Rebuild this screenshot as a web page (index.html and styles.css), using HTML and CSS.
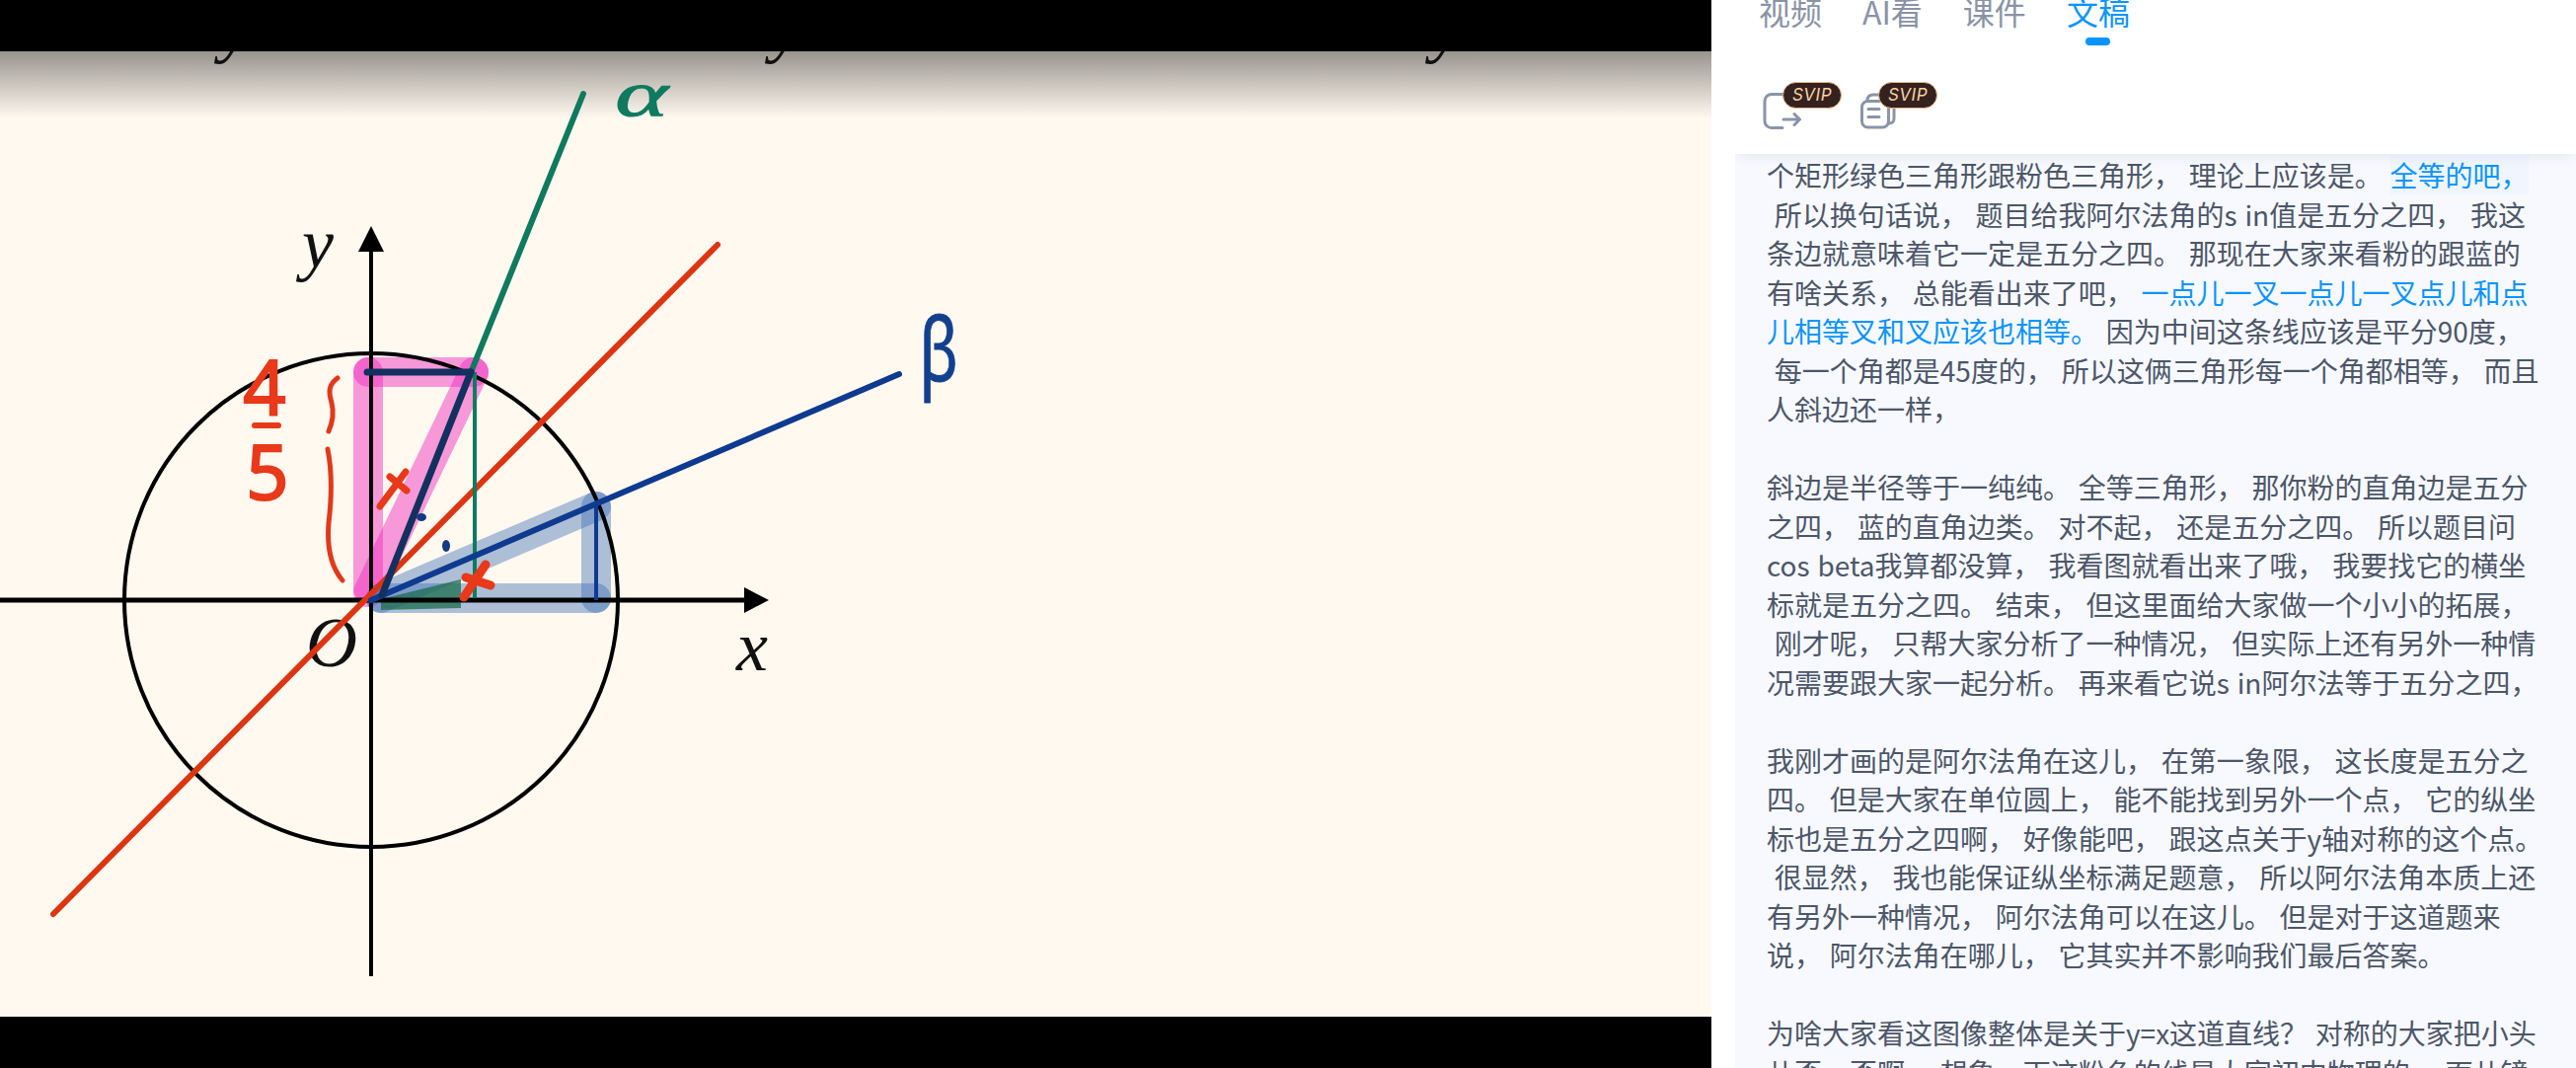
FILE: index.html
```html
<!DOCTYPE html>
<html lang="zh-CN">
<head>
    <meta charset="UTF-8">
    <title>文稿</title>
    <link rel="stylesheet" href="styles.css">
</head>
<body>

    <div class="video">
        <div class="video-bar"></div>
        <svg class="stage" viewBox="0 52 1734 978">
            <!-- previous slide, only the tails are left -->
            <text class="math" x="223" y="50">y</text>
            <text class="math" x="781" y="50">y</text>
            <text class="math" x="1450" y="50">y</text>

            <!-- pink triangle -->
            <g class="band band-pink">
                <line x1="373" y1="377" x2="480" y2="377"/>
                <line x1="373" y1="377" x2="373" y2="596"/>
                <line x1="480" y1="377" x2="373" y2="600"/>
            </g>

            <!-- blue triangle -->
            <g class="band band-blue">
                <line x1="386" y1="606" x2="604" y2="606"/>
                <line x1="604" y1="606" x2="604" y2="513"/>
                <line x1="604" y1="513" x2="386" y2="606"/>
            </g>
            <polygon class="tri-green" points="386,607 467,587 467,616 386,618"/>

            <circle class="unit" cx="376" cy="608" r="250"/>

            <line class="axis" x1="376" y1="250" x2="376" y2="989"/>
            <polygon points="376,229 363,255 389,255"/>
            <line class="axis axis-x" x1="0" y1="608" x2="758" y2="608"/>
            <polygon points="779,608 754,595 754,621"/>

            <text class="math" x="306" y="271">y</text>
            <text class="math" x="310" y="675">O</text>
            <text class="math" x="746" y="679">x</text>

            <line class="ln ln-red" x1="54" y1="926" x2="727" y2="248"/>
            <line class="ln ln-green" x1="591" y1="95" x2="478" y2="375"/>
            <line class="ln ln-green thin" x1="481" y1="377" x2="481" y2="606"/>
            <line class="ln ln-blue" x1="911" y1="379" x2="376" y2="608"/>
            <line class="ln ln-blue thin" x1="604" y1="513" x2="604" y2="608"/>
            <line class="ln ln-navy" x1="372" y1="377" x2="477" y2="377"/>
            <line class="ln ln-navy" x1="477" y1="377" x2="387" y2="603"/>

            <ellipse class="dot" cx="427" cy="524" rx="5" ry="4"/>
            <ellipse class="dot" cx="452" cy="553" rx="4" ry="6"/>

            <!-- red marks -->
            <path class="mark" d="M385 513L411 478M395 483L412 497"/>
            <path class="mark fat" d="M470 605L492 572M472 585L497 593"/>
            <path class="brace" d="M342 383C334 389 332 395 336 408C339 420 336 430 333 437"/>
            <path class="brace" d="M332 455C337 480 336 505 333 530C331 555 336 575 347 588"/>

            <text class="hand hand-red" x="268" y="420">4</text>
            <line class="ln-frac" x1="258" y1="431" x2="282" y2="431"/>
            <text class="hand hand-red" x="271" y="506">5</text>
            <text class="hand hand-green" transform="translate(650 117) scale(1.55 1)" x="0" y="0">α</text>
            <text class="hand hand-blue" transform="translate(951 386) scale(.72 1)" x="0" y="0">β</text>
        </svg>
        <div class="video-bar"></div>
    </div>

    <div class="panel">
        <div class="tabs">
            <div class="tab">视频</div>
            <div class="tab">AI看</div>
            <div class="tab">课件</div>
            <div class="tab active">文稿<span class="tab-line"></span></div>
        </div>

        <div class="doc">
            <div class="toolbar">
                <div class="tool">
                    <svg class="tool-icon" viewBox="0 0 40 40">
                        <path d="M23 3.5H10a7 7 0 0 0-7 7v20a7 7 0 0 0 7 7h11"/>
                        <path d="M22 29h16M33 23.5l5.5 5.5-5.5 5.5"/>
                    </svg>
                    <span class="svip">SVIP</span>
                </div>
                <div class="tool">
                    <svg class="tool-icon" viewBox="0 0 40 40">
                        <rect x="3.5" y="10.5" width="27" height="26.5" rx="6"/>
                        <path d="M9 10c0-4 2-6 6-6h15c4 0 6 2 6 6v18c0 3-2 5-5 5"/>
                        <path d="M10 18.5h11M10 26.5h11"/>
                    </svg>
                    <span class="svip svip-2">SVIP</span>
                </div>
            </div>

            <div class="text">
<p>个矩形绿色三角形跟粉色三角形， 理论上应该是。 <span class="hl hl-box">全等的吧，</span>
 所以换句话说， 题目给我阿尔法角的s in值是五分之四， 我这
条边就意味着它一定是五分之四。 那现在大家来看粉的跟蓝的
有啥关系， 总能看出来了吧， <span class="hl">一点儿一叉一点儿一叉点儿和点
儿相等叉和叉应该也相等。</span> 因为中间这条线应该是平分90度，
 每一个角都是45度的， 所以这俩三角形每一个角都相等， 而且
人斜边还一样，</p>
<p>斜边是半径等于一纯纯。 全等三角形， 那你粉的直角边是五分
之四， 蓝的直角边类。 对不起， 还是五分之四。 所以题目问
cos beta我算都没算， 我看图就看出来了哦， 我要找它的横坐
标就是五分之四。 结束， 但这里面给大家做一个小小的拓展，
 刚才呢， 只帮大家分析了一种情况， 但实际上还有另外一种情
况需要跟大家一起分析。 再来看它说s in阿尔法等于五分之四，</p>
<p>我刚才画的是阿尔法角在这儿， 在第一象限， 这长度是五分之
四。 但是大家在单位圆上， 能不能找到另外一个点， 它的纵坐
标也是五分之四啊， 好像能吧， 跟这点关于y轴对称的这个点。
 很显然， 我也能保证纵坐标满足题意， 所以阿尔法角本质上还
有另外一种情况， 阿尔法角可以在这儿。 但是对于这道题来
说， 阿尔法角在哪儿， 它其实并不影响我们最后答案。</p>
<p>为啥大家看这图像整体是关于y=x这道直线？ 对称的大家把小头
儿否，否啊， 想象，下这粉色的线是大家初中物理的， 面儿镜</p>
            </div>
        </div>
    </div>

</body>
</html>
```

FILE: styles.css
```css
body {
    margin: 0;
    height: 1082px;
    display: flex;
    overflow: hidden;
    background: white;
    font-family: "Noto Sans CJK SC", "Noto Sans", sans-serif;
}

/* left side, the video */
.video {
    width: 1734px;
    flex-shrink: 0;
    display: flex;
    flex-direction: column;
}

.video-bar {
    height: 52px;
    background: black;
}

.stage {
    display: block;
    width: 1734px;
    height: 978px;
    background: linear-gradient(#98948d 0, #fff9f0 68px);
}

.math {
    font-family: "Liberation Serif", serif;
    font-style: italic;
    font-size: 72px;
    fill: #111;
}

.band line {
    fill: none;
    stroke-width: 30px;
    stroke-linecap: round;
}

.band-pink line {
    stroke: #ee2fc0;
    opacity: 0.48;
}

.band-blue line {
    stroke: #3c6db4;
    opacity: 0.42;
}

.tri-green {
    fill: #1c6b4c;
    opacity: 0.75;
}

.unit {
    fill: none;
    stroke: black;
    stroke-width: 4px;
}

.axis {
    stroke: black;
    stroke-width: 4px;
}

.axis-x {
    stroke-width: 5px;
}

.ln {
    stroke-linecap: round;
    stroke-width: 6px;
}

.ln.thin {
    stroke-width: 4px;
    stroke-linecap: butt;
}

.ln-red {
    stroke: #dc3512;
}

.ln-green {
    stroke: #0f7a5f;
}

.ln-blue {
    stroke: #0e3a8f;
}

.ln-navy {
    stroke: #13305f;
    stroke-width: 7px;
}

.dot {
    fill: #143a80;
}

.mark {
    fill: none;
    stroke: #e8391a;
    stroke-width: 7px;
    stroke-linecap: round;
}

.mark.fat {
    stroke-width: 9px;
}

.brace {
    fill: none;
    stroke: #e03a1c;
    stroke-width: 5px;
    stroke-linecap: round;
}

.hand {
    font-family: "Noto Sans", sans-serif;
    text-anchor: middle;
}

.hand-red {
    font-size: 76px;
    fill: #e8391a;
    stroke: #e8391a;
    stroke-width: 2px;
}

.ln-frac {
    stroke: #e8391a;
    stroke-width: 6px;
    stroke-linecap: round;
}

.hand-green {
    font-family: "Liberation Serif", serif;
    font-style: italic;
    font-size: 66px;
    fill: #0f7a5f;
    stroke: #0f7a5f;
    stroke-width: 1px;
}

.hand-blue {
    font-size: 90px;
    fill: #12408f;
    stroke: #12408f;
    stroke-width: 1px;
}

/* right side */
.panel {
    flex: 1;
    min-width: 0;
    display: flex;
    flex-direction: column;
}

.tabs {
    display: flex;
    gap: 41px;
    margin-top: -9px;
    padding-left: 48px;
}

.tab {
    display: flex;
    flex-direction: column;
    align-items: center;
    gap: 7px;
    font-size: 32px;
    line-height: 40px;
    color: #8a93a5;
}

.tab.active {
    color: #0a94ff;
}

.tab-line {
    width: 25px;
    height: 8px;
    border-radius: 4px;
    background: #0a94ff;
}

.doc {
    flex: 1;
    min-height: 0;
    margin-left: 24px;
    background: #f7f9fe;
    display: flex;
    flex-direction: column;
    overflow: hidden;
}

.toolbar {
    display: flex;
    gap: 58px;
    padding: 46px 0 24px 27px;
    background: white;
    box-shadow: 0 6px 12px -4px rgba(40, 60, 100, 0.1);
    position: relative;
}

.tool {
    position: relative;
    width: 40px;
    height: 40px;
}

.tool-icon {
    display: block;
    width: 40px;
    height: 40px;
    fill: none;
    stroke: #8a94a8;
    stroke-width: 3px;
    stroke-linecap: round;
    stroke-linejoin: round;
}

.svip {
    position: absolute;
    left: 21px;
    top: -9px;
    box-sizing: border-box;
    width: 60px;
    height: 27px;
    border: 1px solid #e6b88f;
    border-radius: 14px;
    background: #35211e;
    color: #f8d3a6;
    font-family: Inter, sans-serif;
    font-size: 17px;
    font-style: italic;
    font-weight: 400;
    letter-spacing: 0.5px;
    line-height: 25px;
    text-align: center;
}

.svip-2 {
    left: 20px;
}

.text {
    flex: 1;
    min-height: 0;
    overflow: hidden;
    padding: 2px 0 0 32px;
    font-size: 28px;
    line-height: 39.5px;
    word-spacing: 1.5px;
    color: #4d5669;
}

.text p {
    margin: 0 0 39.5px;
    white-space: pre;
}

.hl {
    color: #0a94ff;
}

.hl-box {
    background: #f0f6fd;
}
```
